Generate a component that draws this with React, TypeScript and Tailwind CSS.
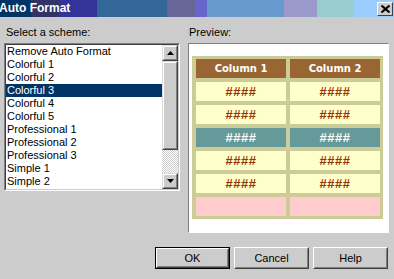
import React from "react";

const schemes = [
  "Remove Auto Format",
  "Colorful 1",
  "Colorful 2",
  "Colorful 3",
  "Colorful 4",
  "Colorful 5",
  "Professional 1",
  "Professional 2",
  "Professional 3",
  "Simple 1",
  "Simple 2",
  "Simple 3",
];

type Row = { kind: "head" | "plain" | "band" | "foot" };
const rows: Row[] = [
  { kind: "head" },
  { kind: "plain" },
  { kind: "plain" },
  { kind: "band" },
  { kind: "plain" },
  { kind: "plain" },
  { kind: "foot" },
];

const ScrollBtn: React.FC<{ down?: boolean }> = ({ down }) => (
  <div className="h-[16px] border border-t-[#dcdcdc] border-l-[#dcdcdc] border-b-[#404040] border-r-[#404040] bg-[#cccccc]">
    <div className="h-full border border-t-white border-l-white border-b-[#808080] border-r-[#808080] flex items-center justify-center">
      <svg width="7" height="4" viewBox="0 0 7 4">
        {down ? <polygon points="0,0 7,0 3.5,4" fill="#000" /> : <polygon points="0,4 7,4 3.5,0" fill="#000" />}
      </svg>
    </div>
  </div>
);

const Button: React.FC<{ label: string; primary?: boolean }> = ({ label, primary }) => (
  <div className={primary ? "w-[75px] h-[22px] border border-black" : "w-[75px] h-[22px]"}>
    <div className="h-full border border-t-white border-l-white border-b-[#404040] border-r-[#404040] bg-[#cccccc]">
      <div className="h-full border border-t-[#cccccc] border-l-[#cccccc] border-b-[#808080] border-r-[#808080] flex items-center justify-center text-[11px] text-black">
        {label}
      </div>
    </div>
  </div>
);

export default function App() {
  return (
    <div className="w-[394px] h-[279px] overflow-hidden bg-[#cccccc] font-['Liberation_Sans',Arial,sans-serif] text-[11px] text-black">
      {/* title bar */}
      <div className="h-[17px] flex items-center justify-between bg-[linear-gradient(to_right,#003366_0_31px,#333366_31px_59px,#333399_59px_97px,#336699_97px_167px,#666699_167px_195px,#6666cc_195px_207px,#6699cc_207px_284px,#9999cc_284px_317px,#99cccc_317px_354px,#99ccff_354px_394px)]">
        <span className="-ml-[1px] text-[12px] font-bold text-white leading-[17px]">Auto Format</span>
        <div className="mr-[1px] mt-[1px] w-[16px] h-[14px] border border-t-white border-l-white border-b-[#404040] border-r-[#404040] bg-[#cccccc] flex items-center justify-center">
          <svg width="9" height="8" viewBox="0 0 9 8">
            <path d="M0.5 0.5 L8.5 7.5 M8.5 0.5 L0.5 7.5" stroke="#000" strokeWidth="2" />
          </svg>
        </div>
      </div>

      <div className="flex gap-[8px] px-[4px] pt-[9px]">
        {/* scheme list */}
        <div className="w-[176px] flex flex-col">
          <div className="h-[13px] leading-[13px] pl-[2px] mb-[4px]">Select a scheme:</div>
          <div className="h-[148px] border border-t-[#808080] border-l-[#808080] border-b-white border-r-white">
            <div className="h-full border border-t-[#404040] border-l-[#404040] border-b-[#cccccc] border-r-[#cccccc] flex">
              <div className="flex-1 bg-white overflow-hidden">
                {schemes.map((s) => (
                  <div
                    key={s}
                    className={
                      s === "Colorful 3"
                        ? "h-[13px] leading-[13px] pl-[1px] bg-[#003366] text-white whitespace-nowrap"
                        : "h-[13px] leading-[13px] pl-[1px] whitespace-nowrap"
                    }
                  >
                    {s}
                  </div>
                ))}
              </div>
              <div className="w-[16px] flex flex-col">
                <ScrollBtn />
                <div className="h-[89px] border border-t-[#dcdcdc] border-l-[#dcdcdc] border-b-[#404040] border-r-[#404040] bg-[#cccccc]">
                  <div className="h-full border border-t-white border-l-white border-b-[#808080] border-r-[#808080]" />
                </div>
                <div className="flex-1 bg-[repeating-conic-gradient(#ffffff_0_25%,#cccccc_0_50%)] bg-size-[2px_2px]" />
                <ScrollBtn down />
              </div>
            </div>
          </div>
        </div>

        {/* preview */}
        <div className="w-[201px] flex flex-col">
          <div className="h-[13px] leading-[13px] pl-[1px] mb-[4px]">Preview:</div>
          <div className="h-[190px] border border-t-[#808080] border-l-[#808080] border-b-white border-r-white bg-white pt-[12px] pl-[3px]">
            <div className="w-[191px] bg-[#cccc99] pt-[3px] pb-[3px] pl-[4px] pr-[3px] grid grid-cols-[90px_90px] auto-rows-[19px] gap-[4px] font-bold">
              {rows.map((r, i) =>
                [0, 1].map((c) => {
                  if (r.kind === "head")
                    return (
                      <div key={`${i}-${c}`} className="bg-[#996633] text-white flex items-center justify-center font-['DejaVu_Sans',Verdana,sans-serif] text-[10px]">
                        {c === 0 ? "Column 1" : "Column 2"}
                      </div>
                    );
                  if (r.kind === "band")
                    return (
                      <div key={`${i}-${c}`} className="bg-[#669999] text-white flex items-center justify-center text-[13px] tracking-[0.5px]">
                        ####
                      </div>
                    );
                  if (r.kind === "foot") return <div key={`${i}-${c}`} className="bg-[#ffcccc]" />;
                  return (
                    <div key={`${i}-${c}`} className="bg-[#ffffcc] text-[#993300] flex items-center justify-center text-[13px] tracking-[0.5px]">
                      ####
                    </div>
                  );
                })
              )}
            </div>
          </div>
        </div>
      </div>

      {/* buttons */}
      <div className="flex justify-end gap-[4px] pr-[6px] mt-[14px]">
        <Button label="OK" primary />
        <Button label="Cancel" />
        <Button label="Help" />
      </div>
    </div>
  );
}
